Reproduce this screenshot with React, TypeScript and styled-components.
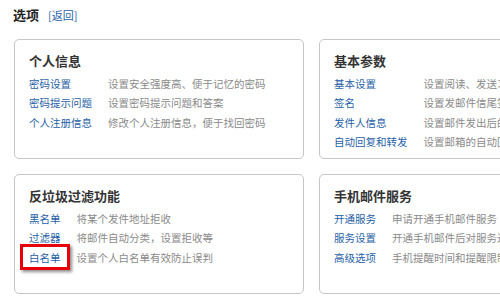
import React from "react";
import styled, { createGlobalStyle } from "styled-components";

const Global = createGlobalStyle`
  html, body { margin: 0; padding: 0; overflow: hidden; background: #ffffff; }
  body { font-family: "Noto Sans CJK SC", "Noto Sans", sans-serif; width: 500px; height: 305px; }
`;

const Page = styled.div`
  padding: 6px 0 0 13px;
`;

const Header = styled.div`
  display: flex;
  align-items: baseline;
  gap: 9px;
  height: 18px;
  margin-bottom: 15px;
`;

const Title = styled.span`
  font-size: 13px;
  font-weight: bold;
  line-height: 18px;
  color: #222;
`;

const BackLink = styled.a`
  font-size: 11px;
  color: #1f5fa8;
  text-decoration: none;
`;

const Grid = styled.div`
  display: grid;
  grid-template-columns: 290px 290px;
  column-gap: 15px;
  row-gap: 15px;
  margin-left: 1px;
  width: 700px;
`;

const Card = styled.section`
  box-sizing: border-box;
  height: 120px;
  border: 1px solid #c6c6c6;
  border-radius: 5px;
  background: #fff;
  padding: 12px 14px 0 14px;
`;

const CardTitle = styled.h3`
  margin: 0 0 4px 0;
  font-size: 13px;
  line-height: 18px;
  font-weight: bold;
  color: #333;
`;

const Rows = styled.div`
  display: grid;
  grid-template-columns: auto 1fr;
  column-gap: 16px;
  font-size: 10.5px;
  line-height: 19.3px;
  white-space: nowrap;
`;

const ItemLink = styled.a`
  position: relative;
  color: #1f5fa8;
  text-decoration: none;
  justify-self: start;
`;

const Desc = styled.span`
  color: #8a8a8a;
`;

const Highlight = styled.span`
  position: absolute;
  left: -9px;
  right: -9px;
  top: -4px;
  bottom: -3px;
  border: 3px solid #e6000a;
  box-shadow: 2px 2px 3px rgba(0, 0, 0, 0.45);
  pointer-events: none;
`;

type Item = { label: string; desc: string; highlight?: boolean };
type Section = { title: string; items: Item[] };

const sections: Section[] = [
  {
    title: "个人信息",
    items: [
      { label: "密码设置", desc: "设置安全强度高、便于记忆的密码" },
      { label: "密码提示问题", desc: "设置密码提示问题和答案" },
      { label: "个人注册信息", desc: "修改个人注册信息，便于找回密码" },
    ],
  },
  {
    title: "基本参数",
    items: [
      { label: "基本设置", desc: "设置阅读、发送习惯等" },
      { label: "签名", desc: "设置发邮件信尾签名" },
      { label: "发件人信息", desc: "设置邮件发出后的显示名称" },
      { label: "自动回复和转发", desc: "设置邮箱的自动回复和转发" },
    ],
  },
  {
    title: "反垃圾过滤功能",
    items: [
      { label: "黑名单", desc: "将某个发件地址拒收" },
      { label: "过滤器", desc: "将邮件自动分类，设置拒收等" },
      { label: "白名单", desc: "设置个人白名单有效防止误判", highlight: true },
    ],
  },
  {
    title: "手机邮件服务",
    items: [
      { label: "开通服务", desc: "申请开通手机邮件服务" },
      { label: "服务设置", desc: "开通手机邮件后对服务进行设置" },
      { label: "高级选项", desc: "手机提醒时间和提醒限制" },
    ],
  },
];

export default function App() {
  return (
    <Page>
      <Global />
      <Header>
        <Title>选项</Title>
        <BackLink href="#">[返回]</BackLink>
      </Header>
      <Grid>
        {sections.map((s) => (
          <Card key={s.title}>
            <CardTitle>{s.title}</CardTitle>
            <Rows>
              {s.items.map((it) => (
                <React.Fragment key={it.label}>
                  <ItemLink href="#">
                    {it.label}
                    {it.highlight && <Highlight />}
                  </ItemLink>
                  <Desc>{it.desc}</Desc>
                </React.Fragment>
              ))}
            </Rows>
          </Card>
        ))}
      </Grid>
    </Page>
  );
}
